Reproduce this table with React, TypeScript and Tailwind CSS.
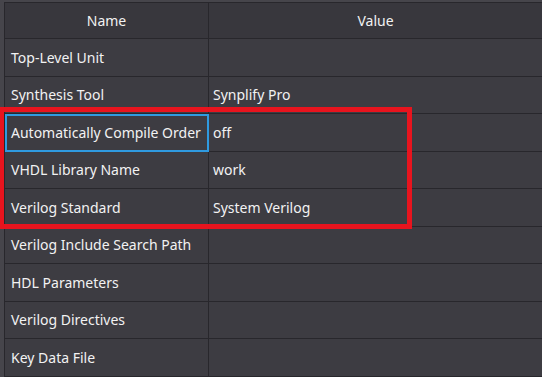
import React from "react";

const rows: { name: string; value: string; h: number }[] = [
  { name: "Top-Level Unit", value: "", h: 38 },
  { name: "Synthesis Tool", value: "Synplify Pro", h: 37 },
  { name: "Automatically Compile Order", value: "off", h: 38 },
  { name: "VHDL Library Name", value: "work", h: 37 },
  { name: "Verilog Standard", value: "System Verilog", h: 38 },
  { name: "Verilog Include Search Path", value: "", h: 37 },
  { name: "HDL Parameters", value: "", h: 38 },
  { name: "Verilog Directives", value: "", h: 37 },
  { name: "Key Data File", value: "", h: 38 },
];

export default function App() {
  return (
    <div
      className="relative w-[542px] h-[377px] overflow-hidden bg-[#46454b] pt-[2px] pl-[4px] text-[14px] text-[#f2f2f2]"
      style={{ fontFamily: '"Noto Sans", "Open Sans", sans-serif' }}
    >
      <div className="border-t border-l border-[#28272c] bg-[#3d3c42]">
        {/* header */}
        <div className="grid grid-cols-[204px_1fr] h-[36px] bg-[#38373d]">
          <div className="flex items-center justify-center border-r border-b border-[#28272c]">Name</div>
          <div className="flex items-center justify-center border-b border-[#28272c]">Value</div>
        </div>
        {rows.map((r, i) => (
          <div key={r.name} className="grid grid-cols-[204px_1fr] overflow-hidden" style={{ height: r.h }}>
            <div
              className={
                i === 2
                  ? "flex items-center whitespace-nowrap pl-[6px] pb-[1px] border-r border-b border-[#28272c] outline-2 outline-[#2f9ae0] -outline-offset-2"
                  : "flex items-center whitespace-nowrap pl-[6px] pb-[1px] border-r border-b border-[#28272c]"
              }
            >
              {r.name}
            </div>
            <div className="flex items-center whitespace-nowrap pl-[4px] pb-[1px] border-b border-[#28272c]">{r.value}</div>
          </div>
        ))}
      </div>
      {/* highlight box */}
      <div className="absolute left-[-1px] top-[107px] w-[413px] h-[122px] border-[5px] border-[#e8141e]" />
    </div>
  );
}
